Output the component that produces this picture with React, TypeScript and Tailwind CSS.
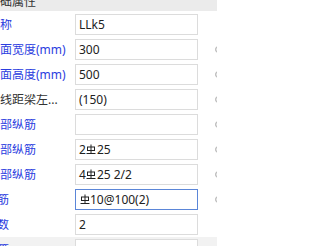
import React from 'react'

// HRB400 rebar grade symbol
function Rebar() {
  return (
    <svg
      width="10"
      height="11"
      viewBox="0 0 10 11"
      className="inline-block align-[-1px] mx-[0.5px]"
      fill="none"
      stroke="#222"
      strokeWidth="1"
    >
      <path d="M5 0.5V10" />
      <rect x="1.5" y="3" width="7" height="3.5" />
      <path d="M0.5 9.5H9.5" />
    </svg>
  )
}

type Row = {
  label: string
  value: React.ReactNode
  labelTone?: 'blue' | 'dark'
  shift?: boolean
  dot?: boolean
  focused?: boolean
  shaded?: boolean
}

const rows: Row[] = [
  { label: '名称', value: 'LLk5' },
  { label: '截面宽度(mm)', value: '300', dot: true },
  { label: '截面高度(mm)', value: '500', dot: true },
  { label: '轴线距梁左...', value: '(150)', labelTone: 'dark', dot: true },
  { label: '全部纵筋', value: '', dot: true },
  {
    label: '上部纵筋',
    value: (
      <>
        2<Rebar />25
      </>
    ),
    dot: true,
  },
  {
    label: '下部纵筋',
    value: (
      <>
        4<Rebar />25 2/2
      </>
    ),
    dot: true,
  },
  {
    label: '箍筋',
    value: (
      <>
        <Rebar />10@100(2)
      </>
    ),
    shift: true,
    dot: true,
    focused: true,
  },
  { label: '肢数', value: '2', shift: true },
  { label: '拉筋', value: '', shift: true, shaded: true },
]

function PropertyRow({ row }: { row: Row }) {
  return (
    <div
      className={
        'flex items-center h-[25px] py-[2px] ' +
        (row.shaded ? 'bg-[#f2f2f2]' : 'bg-white')
      }
    >
      <div className="w-[87px] -ml-[12px] shrink-0 overflow-hidden whitespace-nowrap">
        <span
          className={
            (row.shift ? '-ml-[3px] ' : '') +
            (row.labelTone === 'dark' ? 'text-[#333333]' : 'text-[#2b3de0]')
          }
        >
          {row.label}
        </span>
      </div>
      <div
        className={
          'w-[123px] h-[21px] shrink-0 flex items-center pl-[3px] bg-white text-[#222222] whitespace-nowrap border ' +
          (row.focused ? 'border-[#5b86d8]' : 'border-[#dcdcdc]')
        }
      >
        {row.value}
      </div>
      {row.dot && (
        <div className="ml-[17px] w-[7px] h-[7px] shrink-0 rounded-full border-[1.5px] border-[#b0b0b0] bg-[#e4e4e4]" />
      )}
    </div>
  )
}

export default function App() {
  return (
    <div
      className="w-[217px] h-[246px] overflow-hidden bg-white text-[12px] leading-none"
      style={{ fontFamily: '"Noto Sans", "Noto Sans CJK SC", sans-serif' }}
    >
      {/* Section header, scrolled partly out of view */}
      <div className="h-[11px] bg-[#ebebeb] overflow-hidden relative">
        <div className="-ml-[12px] -mt-[5px] text-[#333333] whitespace-nowrap leading-[14px]">
          基础属性
        </div>
      </div>
      <div className="pt-[1px]">
        {rows.map((row) => (
          <PropertyRow key={row.label} row={row} />
        ))}
      </div>
    </div>
  )
}
